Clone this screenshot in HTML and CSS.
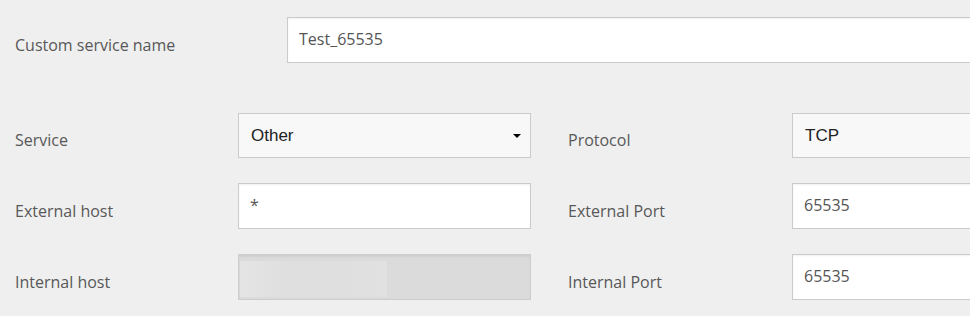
FILE: index.html
```html
<!DOCTYPE html>
<html lang="en">
<head>
    <meta charset="UTF-8">
    <meta name="viewport" content="width=device-width, initial-scale=1.0">
    <title>Port forwarding</title>
    <link rel="stylesheet" href="styles.css">
</head>
<body>
    <div class="form">
        <div class="row row-name">
            <label class="label">Custom service name</label>
            <div class="field"><input class="input" type="text" value="Test_65535"></div>
        </div>

        <div class="row row-split">
            <label class="label">Service</label>
            <div class="field">
                <div class="select">Other<span class="caret"></span></div>
            </div>
            <label class="label label-right">Protocol</label>
            <div class="field">
                <div class="select">TCP</div>
            </div>
        </div>

        <div class="row row-split">
            <label class="label">External host</label>
            <div class="field"><input class="input" type="text" value="*"></div>
            <label class="label label-right">External Port</label>
            <div class="field"><input class="input" type="text" value="65535"></div>
        </div>

        <div class="row row-split">
            <label class="label">Internal host</label>
            <div class="field">
                <div class="input disabled"><span class="blur"></span></div>
            </div>
            <label class="label label-right">Internal Port</label>
            <div class="field"><input class="input" type="text" value="65535"></div>
        </div>
    </div>
</body>
</html>
```

FILE: styles.css
```css
*{ box-sizing: border-box;}
html, body{
    margin:0;
    background:#efefef;
    overflow:hidden;
}
.form{
    padding:17px 0 0 15px;
    width:1200px;
    font-family: "Open Sans", Lato, sans-serif;
}
.row{
    display:flex;
    align-items:center;
}
.row-name{
    margin-bottom:50px;
}
.row-split{
    margin-bottom:25px;
}
.label{
    color:#585858;
    font-size:16px;
    padding-top:9px;
}
.row-name .label{
    width:272px;
}
.row-split .label{
    width:223px;
}
.row-split .label-right{
    width:224px;
    margin-left:37px;
}
.row-name .field{
    width:800px;
}
.row-split .field{
    width:293px;
}
.input{
    display:block;
    width:100%;
    height:46px;
    border:1px solid #cbcbcb;
    background:#fff;
    box-shadow: inset 0 1px 2px rgba(0,0,0,0.06);
    padding:0 11px 2px;
    font-family: "Open Sans", Lato, sans-serif;
    font-size:16px;
    color:#555;
    outline:none;
}
.disabled{
    position:relative;
    background:#dbdbdb;
    border-color:#cdcdcd;
    box-shadow: inset 0 2px 2px rgba(0,0,0,0.05);
}
.blur{
    position:absolute;
    left:1px;
    top:6px;
    width:147px;
    height:36px;
    background:linear-gradient(90deg, #e4e4e4, #dedede 40%, #e1e1e1);
}
.select{
    position:relative;
    height:45px;
    line-height:43px;
    border:1px solid #cbcbcb;
    background:#f8f8f8;
    padding:0 12px;
    font-family: "Liberation Sans", Arial, sans-serif;
    font-size:17px;
    color:#222;
}
.caret{
    position:absolute;
    right:9px;
    top:20px;
    border-left:4px solid transparent;
    border-right:4px solid transparent;
    border-top:4px solid #000;
}
```
